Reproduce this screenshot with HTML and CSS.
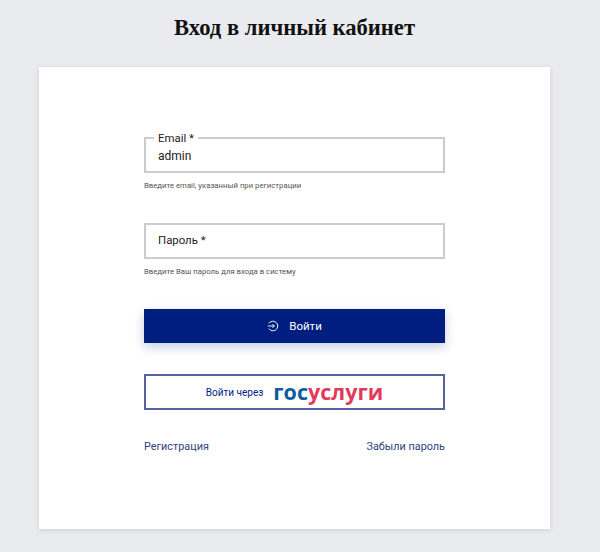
FILE: index.html
```html
<!DOCTYPE html>
<html lang="ru">

<head>
    <meta charset="UTF-8">
    <meta name="viewport" content="width=device-width, initial-scale=1.0">
    <title>Вход в личный кабинет</title>
    <link rel="stylesheet" href="styles.css">
</head>

<body>
    <div class="page">
        <h1 class="page-title">Вход в личный кабинет</h1>

        <main class="card">
            <form class="login-form">
                <div class="field">
                    <div class="field-box">
                        <label class="field-label field-label-float" for="email">Email *</label>
                        <input id="email" class="field-input" type="text" value="admin">
                    </div>
                    <p class="field-hint">Введите email, указанный при регистрации</p>
                </div>

                <div class="field">
                    <div class="field-box">
                        <label class="field-label" for="password">Пароль *</label>
                        <input id="password" class="field-input" type="password">
                    </div>
                    <p class="field-hint">Введите Ваш пароль для входа в систему</p>
                </div>

                <button type="button" class="btn-login">
                    <svg class="btn-icon" viewBox="0 0 14 14" width="12" height="12" fill="none" stroke="#fff" stroke-width="1.1">
                        <path d="M2.2 4a5.6 5.6 0 1 1 0 6"/>
                        <path d="M1 7h7.6M6.4 4.8 8.6 7 6.4 9.2"/>
                    </svg>
                    Войти
                </button>

                <a class="btn-gosuslugi" href="#">
                    <span class="gos-text">Войти через</span>
                    <span class="gos-logo"><span class="gos-blue">гос</span><span class="gos-red">услуги</span></span>
                </a>

                <div class="form-links">
                    <a href="#">Регистрация</a>
                    <a href="#">Забыли пароль</a>
                </div>
            </form>
        </main>
    </div>
</body>

</html>
```

FILE: styles.css
```css
/* General styles */
* {
    box-sizing: border-box;
    margin: 0;
    padding: 0;
}

:root {
    --bg-color: #e9ebee;
    --primary-color: #001e7f;
    --link-color: #33437f;
    --border-color: #cccccc;
}

body {
    background-color: var(--bg-color);
    color: #1a1a1a;
    font-family: Roboto, sans-serif;
    height: 552px;
    overflow: hidden;
}

.page {
    width: 589px;
    padding: 0 39px;
}

.page-title {
    padding-top: 15px;
    height: 67px;
    text-align: center;
    font-family: 'Liberation Serif', serif;
    font-size: 22.6px;
    line-height: 26px;
    font-weight: bold;
    color: #111;
}

/* Card */
.card {
    height: 462px;
    padding: 70px 105px 0;
    background-color: #fff;
    box-shadow: 0 1px 5px rgba(0, 0, 0, 0.12);
}

/* Fields */
.field {
    height: 86px;
}

.field-box {
    position: relative;
    height: 36px;
    border: 2px solid var(--border-color);
}

.field-label {
    position: absolute;
    left: 12px;
    top: 6px;
    font-size: 11.4px;
    line-height: 18px;
    color: #222;
}

.field-label-float {
    top: -10px;
    left: 8px;
    padding: 0 4px;
    background-color: #fff;
}

.field-input {
    width: 100%;
    height: 100%;
    padding: 1px 12px 0;
    border: none;
    outline: none;
    background: transparent;
    font-family: inherit;
    font-size: 12px;
    color: #222;
}

.field-hint {
    margin-top: 7px;
    font-size: 7.75px;
    line-height: 12px;
    color: #555;
}

/* Buttons */
.btn-login {
    display: flex;
    align-items: center;
    justify-content: center;
    gap: 10px;
    width: 100%;
    height: 34px;
    border: none;
    background-color: var(--primary-color);
    color: #fff;
    font-family: inherit;
    font-size: 11.5px;
    box-shadow: 0 4px 10px rgba(0, 30, 127, 0.22);
}

.btn-gosuslugi {
    display: flex;
    align-items: center;
    justify-content: center;
    gap: 10px;
    height: 36px;
    margin-top: 31px;
    border: 2px solid #54649f;
    text-decoration: none;
}

.gos-text {
    font-size: 10px;
    color: var(--primary-color);
}

.gos-logo {
    font-size: 21.5px;
    line-height: 26px;
    font-weight: bold;
    font-family: 'Open Sans', sans-serif;
}

.gos-blue {
    color: #0d5c9e;
}

.gos-red {
    color: #e3395a;
}

/* Links */
.form-links {
    display: flex;
    justify-content: space-between;
    margin-top: 28px;
    font-size: 10.85px;
    line-height: 18px;
}

.form-links a {
    color: var(--link-color);
    text-decoration: none;
}
```
